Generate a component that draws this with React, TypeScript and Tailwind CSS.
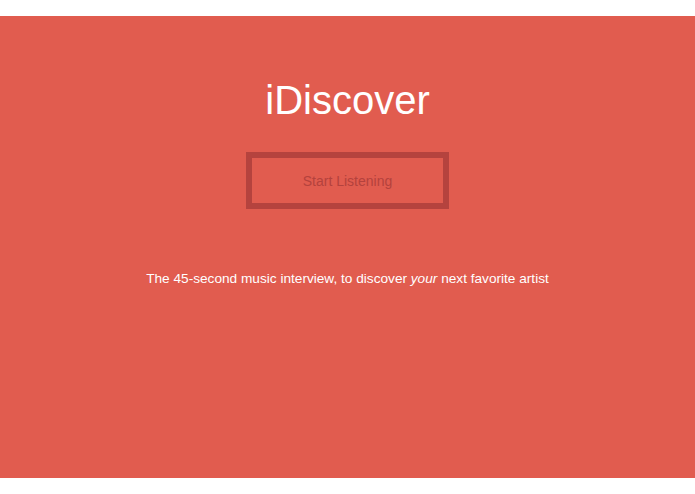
export default function App() {
  return (
    <div className="min-h-[494px] bg-white py-4 font-['Liberation_Sans',Arial,sans-serif]">
      <main className="h-[462px] bg-[#e15c4f] flex flex-col items-center pt-[61px]">
        <h1 className="text-[40px] leading-[46px] text-white font-normal">iDiscover</h1>

        <button className="mt-[29px] w-[203px] h-[57px] border-[6px] border-[#b5433e] flex items-center justify-center pt-[2px] text-[14px] text-[#b4423d] cursor-pointer">
          Start Listening
        </button>

        <p className="mt-[60px] text-[13.65px] leading-5 text-white">
          The 45-second music interview, to discover <em>your</em> next favorite artist
        </p>
      </main>
    </div>
  );
}
